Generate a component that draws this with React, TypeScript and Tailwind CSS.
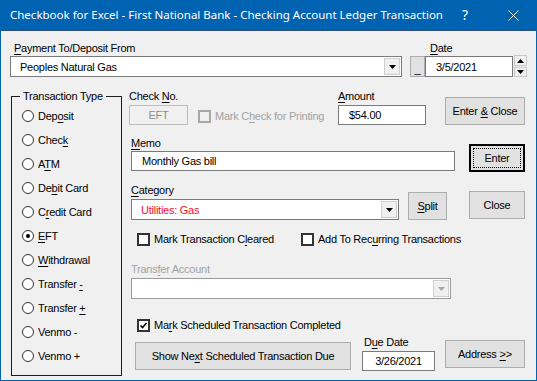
import React from 'react';

const U = ({ children }: { children: React.ReactNode }) => (
    <span className="underline underline-offset-[2px] decoration-1">{children}</span>
);

const DropArrow = ({ disabled }: { disabled?: boolean }) => (
    <div className="w-[16px] self-stretch my-[1px] mr-[1px] bg-[#f0f0f0] border border-[#cfcfcf] flex items-center justify-center">
        <svg width="7" height="4" viewBox="0 0 7 4">
            <path d="M0 0h7L3.5 4z" fill={disabled ? '#a6a6a6' : '#000'} />
        </svg>
    </div>
);

const Btn = ({ className, children }: { className: string; children: React.ReactNode }) => (
    <button className={`h-[28px] bg-[#e1e1e1] border border-[#adadad] flex items-center justify-center shrink-0 ${className}`}>
        {children}
    </button>
);

const CheckBox = ({ checked, disabled, children }: { checked?: boolean; disabled?: boolean; children: React.ReactNode }) => (
    <div className="flex items-center h-[16px]">
        <div
            className={
                disabled
                    ? 'w-[13px] h-[13px] border-2 border-[#a8a8a8] bg-[#f0f0f0] shrink-0'
                    : 'w-[13px] h-[13px] border-2 border-[#333333] bg-white shrink-0 flex items-center justify-center'
            }
        >
            {checked && (
                <svg width="9" height="9" viewBox="0 0 9 9">
                    <path d="M1.5 4.5L3.5 6.5L7.5 2" stroke="#000" strokeWidth="1.6" fill="none" />
                </svg>
            )}
        </div>
        <span className={disabled ? 'ml-[4px] text-[#a3a3a3] whitespace-nowrap' : 'ml-[4px] whitespace-nowrap'}>{children}</span>
    </div>
);

const Radio = ({ checked, children }: { checked?: boolean; children: React.ReactNode }) => (
    <div className="h-[24px] flex items-center pl-[10px]">
        <div className="w-[12px] h-[12px] rounded-full border-[1.5px] border-[#333333] bg-white flex items-center justify-center">
            {checked && <div className="w-[4px] h-[4px] rounded-full bg-black" />}
        </div>
        <span className="ml-[4px] whitespace-nowrap">{children}</span>
    </div>
);

const App: React.FC = () => {
    return (
        <div className="w-[537px] h-[381px] bg-[#0063b1] flex flex-col overflow-hidden font-['Liberation_Sans',Arial,sans-serif] text-[11px] leading-[16px] tracking-[-0.25px] text-black">
            {/* Title bar */}
            <div className="h-[30px] shrink-0 flex items-center pl-[10px] text-white font-['Noto_Sans',sans-serif] text-[11.5px] tracking-normal">
                <span className="w-[448px] whitespace-nowrap">Checkbook for Excel - First National Bank - Checking Account Ledger Transaction</span>
                <span className="w-[14px] text-center text-[14px]">?</span>
                <svg className="ml-[36px]" width="11" height="11" viewBox="0 0 11 11">
                    <path d="M0.5 0.5L10.5 10.5M10.5 0.5L0.5 10.5" stroke="#fff" strokeWidth="1" />
                </svg>
            </div>

            {/* Body */}
            <div className="flex-1 mx-px mb-px bg-[#f0f0f0] border-t border-[#2c4f78] pl-[9px] pt-[9px] flex flex-col">
                {/* Payment / Date */}
                <div className="flex">
                    <div className="flex flex-col w-[392px]">
                        <div className="h-[16px] pl-[4px]">
                            <U>P</U>ayment To/Deposit From
                        </div>
                        <div className="h-[21px] bg-white border border-[#7a7a7a] flex items-center">
                            <span className="flex-1 pl-[9px]">Peoples Natural Gas</span>
                            <DropArrow />
                        </div>
                    </div>
                    <div className="flex flex-col ml-[8px]">
                        <div className="h-[16px] pl-[20px]">
                            <U>D</U>ate
                        </div>
                        <div className="flex h-[21px]">
                            <button className="w-[15px] bg-[#e1e1e1] border border-[#adadad] flex items-end justify-center pb-[3px] leading-[8px]">_</button>
                            <div className="w-[88px] bg-white border border-[#7a7a7a] flex items-center pl-[10px]">3/5/2021</div>
                            <div className="w-[13px] ml-px flex flex-col gap-px -mt-px">
                                <div className="h-[11px] bg-[#f0f0f0] border border-[#c8c8c8] flex items-center justify-center">
                                    <svg width="7" height="4" viewBox="0 0 7 4"><path d="M3.5 0L7 4H0z" fill="#000" /></svg>
                                </div>
                                <div className="h-[10px] bg-[#f0f0f0] border border-[#c8c8c8] flex items-center justify-center">
                                    <svg width="7" height="4" viewBox="0 0 7 4"><path d="M0 0h7L3.5 4z" fill="#000" /></svg>
                                </div>
                            </div>
                        </div>
                    </div>
                </div>

                {/* Lower section */}
                <div className="flex mt-[11px]">
                    {/* Transaction Type */}
                    <fieldset className="ml-px w-[111px] h-[288px] border border-[#1e1e1e]">
                        <legend className="ml-[8px] px-[3px] h-[16px]">Transaction Type</legend>
                        <Radio>Dep<U>o</U>sit</Radio>
                        <Radio>Chec<U>k</U></Radio>
                        <Radio>A<U>T</U>M</Radio>
                        <Radio>De<U>b</U>it Card</Radio>
                        <Radio>C<U>r</U>edit Card</Radio>
                        <Radio checked><U>E</U>FT</Radio>
                        <Radio><U>W</U>ithdrawal</Radio>
                        <Radio>Transfer <U>-</U></Radio>
                        <Radio>Transfer <U>+</U></Radio>
                        <Radio>Venmo -</Radio>
                        <Radio>Venmo +</Radio>
                    </fieldset>

                    <div className="ml-[7px] flex flex-col">
                        {/* Check No / Amount */}
                        <div className="flex items-end">
                            <div className="flex flex-col w-[59px]">
                                <div className="h-[16px]">Check <U>N</U>o.</div>
                                <div className="h-[20px] mt-px bg-[#f0f0f0] border border-[#bcbcbc] flex items-center justify-center text-[#8c8c8c]">EFT</div>
                            </div>
                            <div className="ml-[10px] w-[140px] mb-px">
                                <CheckBox disabled>Mark C<U>h</U>eck for Printing</CheckBox>
                            </div>
                            <div className="flex flex-col w-[88px]">
                                <div className="h-[16px]"><U>A</U>mount</div>
                                <div className="h-[20px] mt-px bg-white border border-[#7a7a7a] flex items-center pl-[10px]">$54.00</div>
                            </div>
                            <Btn className="ml-[19px] w-[80px]">Enter <span className="ml-[3px]"><U>&amp;</U></span>&nbsp;Close</Btn>
                        </div>

                        {/* Memo */}
                        <div className="flex items-end mt-[10px]">
                            <div className="flex flex-col ml-[2px] w-[324px] mb-px">
                                <div className="h-[16px]"><U>M</U>emo</div>
                                <div className="h-[20px] bg-white border border-[#7a7a7a] flex items-center pl-[10px]">Monthly Gas bill</div>
                            </div>
                            <button className="ml-[14px] w-[56px] h-[28px] bg-[#e1e1e1] border-2 border-black p-[2px] shrink-0">
                                <div className="h-full border border-dotted border-black flex items-center justify-center">Enter</div>
                            </button>
                        </div>

                        {/* Category */}
                        <div className="flex items-start mt-[10px]">
                            <div className="flex flex-col ml-[2px] w-[268px]">
                                <div className="h-[16px]"><U>C</U>ategory</div>
                                <div className="h-[21px] mt-px bg-white border border-[#7a7a7a] flex items-center">
                                    <span className="flex-1 pl-[9px] text-[#f01030]">Utilities: Gas</span>
                                    <DropArrow />
                                </div>
                            </div>
                            <Btn className="ml-[9px] mt-[10px] w-[39px]"><U>S</U>plit</Btn>
                            <Btn className="ml-[22px] mt-[9px] w-[56px]">Close</Btn>
                        </div>

                        {/* Cleared / Recurring */}
                        <div className="flex mt-[11px] ml-[8px]">
                            <div className="w-[164px]">
                                <CheckBox>Mark Transaction C<U>l</U>eared</CheckBox>
                            </div>
                            <CheckBox>Add To Rec<U>u</U>rring Transactions</CheckBox>
                        </div>

                        {/* Transfer Account */}
                        <div className="flex flex-col ml-[2px] w-[320px] mt-[14px]">
                            <div className="h-[16px] text-[#a3a3a3]">Trans<U>f</U>er Account</div>
                            <div className="h-[21px] mt-px bg-white border border-[#9a9a9a] flex items-center justify-end">
                                <DropArrow disabled />
                            </div>
                        </div>

                        {/* Scheduled */}
                        <div className="mt-[18px] ml-[8px]">
                            <CheckBox checked>Ma<U>r</U>k Scheduled Transaction Completed</CheckBox>
                        </div>

                        {/* Bottom buttons */}
                        <div className="flex items-start">
                            <Btn className="ml-[6px] mt-[9px] w-[216px]">Show Ne<U>x</U>t Scheduled Transaction Due</Btn>
                            <div className="flex flex-col ml-[11px] mt-px w-[73px]">
                                <div className="h-[16px] pl-[2px]">D<U>u</U>e Date</div>
                                <div className="h-[20px] mt-px bg-white border border-[#7a7a7a] flex items-center justify-center">3/26/2021</div>
                            </div>
                            <Btn className="ml-[10px] mt-[7px] w-[80px]">Address <span className="ml-[3px]"><U>&gt;</U>&gt;</span></Btn>
                        </div>
                    </div>
                </div>
            </div>
        </div>
    );
};

export default App;
